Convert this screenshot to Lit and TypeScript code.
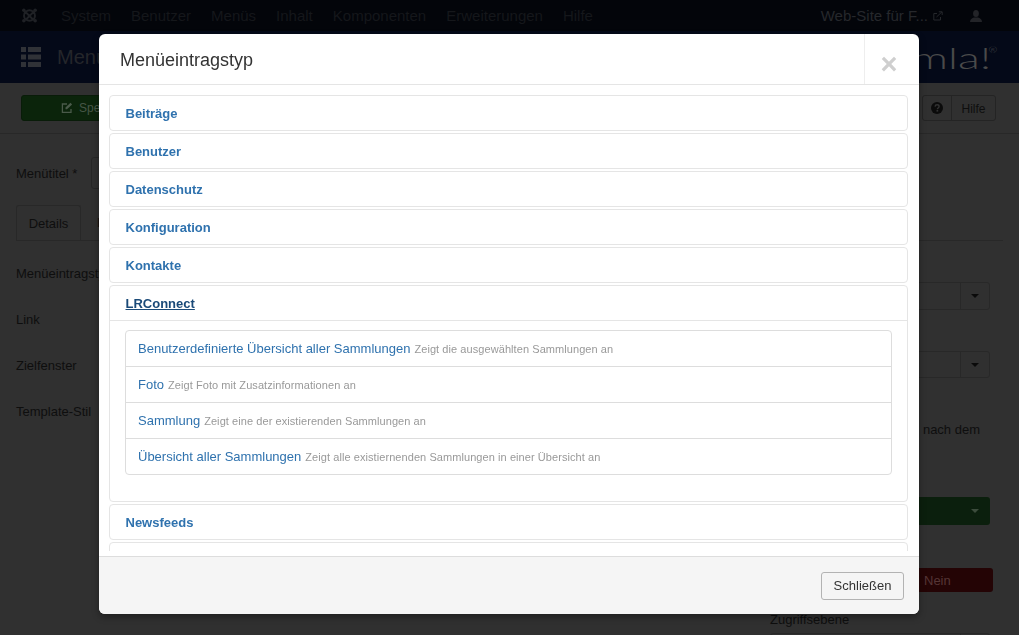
import { LitElement, html, css, svg } from "lit";
import { customElement } from "lit/decorators.js";

const closedBefore = ["Beiträge", "Benutzer", "Datenschutz", "Konfiguration", "Kontakte"];
const rows = [
  ["Benutzerdefinierte Übersicht aller Sammlungen", "Zeigt die ausgewählten Sammlungen an"],
  ["Foto", "Zeigt Foto mit Zusatzinformationen an"],
  ["Sammlung", "Zeigt eine der existierenden Sammlungen an"],
  ["Übersicht aller Sammlungen", "Zeigt alle existiernenden Sammlungen in einer Übersicht an"],
];
const navItems = ["System", "Benutzer", "Menüs", "Inhalt", "Komponenten", "Erweiterungen", "Hilfe"];

const joomla = svg`<svg width="17" height="17" viewBox="0 0 18 18" fill="none" stroke="#1f2125" stroke-width="2" stroke-linecap="round"><path d="M4 4.5 L13 13.5 M14 4.5 L5 13.5 M5 5 Q9 2 13 5 M5 13 Q9 16 13 13 M4.5 5 Q2 9 4.5 13 M13.5 5 Q16 9 13.5 13"/><circle cx="3" cy="3.5" r="1.9" fill="#1f2125" stroke="none"/><circle cx="15" cy="3.5" r="1.9" fill="#1f2125" stroke="none"/><circle cx="3" cy="14.5" r="1.9" fill="#1f2125" stroke="none"/><circle cx="15" cy="14.5" r="1.9" fill="#1f2125" stroke="none"/></svg>`;
const listIcon = svg`<svg width="20" height="20" viewBox="0 0 20 20" fill="#303237"><rect x="0" y="0" width="5" height="5"/><rect x="7" y="0" width="13" height="5"/><rect x="0" y="7.5" width="5" height="5"/><rect x="7" y="7.5" width="13" height="5"/><rect x="0" y="15" width="5" height="5"/><rect x="7" y="15" width="13" height="5"/></svg>`;
const editIcon = svg`<svg width="12" height="12" viewBox="0 0 12 12" fill="none" stroke="#4a5a4a" stroke-width="1.3"><path d="M10 7v3.4H1.4V2H6"/><path d="M4.5 5.5 9.5 0.8l1.6 1.6L6 7.3H4.5z" fill="#4a5a4a" stroke="none"/></svg>`;
const extIcon = svg`<svg width="10" height="10" viewBox="0 0 10 10" fill="none" stroke="#26282c" stroke-width="1"><path d="M7.5 6v3H.8V2.5H4"/><path d="M3.5 6 9 .8M5.8.8H9.2V4"/></svg>`;
const userIcon = svg`<svg width="12" height="12" viewBox="0 0 12 12" fill="#232428"><ellipse cx="6" cy="3.6" rx="2.9" ry="3.5"/><path d="M0 12c0-3 2-4 4-4.6h4c2 .6 4 1.6 4 4.6z"/></svg>`;
const helpIcon = svg`<svg width="12" height="12" viewBox="0 0 12 12"><circle cx="6" cy="6" r="6" fill="#0b0b0b"/><path d="M4 4.6C4.2 3.4 5 2.8 6.1 2.8 7.3 2.8 8.1 3.5 8.1 4.5 8.1 6 6.4 6 6.4 7.2" fill="none" stroke="#333" stroke-width="1.4"/><rect x="5.5" y="8" width="1.7" height="1.6" fill="#333"/></svg>`;

@customElement("app-root")
export class AppRoot extends LitElement {
  static styles = css`
    :host {
      display: block;
      position: relative;
      width: 1019px;
      height: 635px;
      overflow: hidden;
      background: #303030;
      font-family: "Liberation Sans", Arial, sans-serif;
      font-size: 13px;
      color: #0e0e0e;
    }
    a { text-decoration: none; }

    /* dimmed page behind the dialog */
    .nav {
      height: 31px;
      background: #03050a;
      display: flex;
      align-items: center;
      padding: 0 21px;
      box-sizing: border-box;
      font-size: 15px;
      color: #15171b;
    }
    .nav .logo { display: flex; width: 40px; }
    .nav .items { display: flex; gap: 20px; }
    .nav .right { margin-left: auto; display: flex; align-items: center; color: #26282c; padding-right: 16px; }
    .nav .ext { display: flex; margin-left: 5px; }
    .nav .user { display: flex; margin-left: 27px; }

    .brand {
      height: 52px;
      background: #040918;
      display: flex;
      align-items: center;
      padding: 0 28px 0 21px;
      color: #24262b;
      font-size: 20px;
    }
    .brand .ic { display: flex; margin-right: 16px; }
    .brand .logo {
      margin-left: auto;
      font-family: Lato, sans-serif;
      font-weight: 300;
      font-size: 30px;
      color: #4a4a4a;
      position: relative;
      transform: scaleX(1.5);
      transform-origin: right center;
    }
    .brand sup { font-size: 7px; position: absolute; top: 7px; right: -4px; }

    .toolbar {
      height: 51px;
      box-sizing: border-box;
      border-bottom: 1px solid #282828;
      display: flex;
      align-items: center;
      padding: 0 23px 0 21px;
    }
    .save {
      width: 120px;
      height: 26px;
      background: #0b240b;
      border: 1px solid #091c09;
      border-radius: 3px;
      box-sizing: border-box;
      display: flex;
      align-items: center;
      padding-left: 39px;
      gap: 6px;
      font-size: 12px;
      color: #465646;
    }
    .help {
      margin-left: auto;
      display: flex;
      height: 26px;
      box-sizing: border-box;
      border: 1px solid #242424;
      border-radius: 3px;
      font-size: 12px;
    }
    .help span { display: flex; align-items: center; justify-content: center; }
    .help .q { width: 28px; border-right: 1px solid #242424; }
    .help .t { width: 43px; padding-top: 1px; }

    .content { padding: 26px 16px 0; }
    .title-row { display: flex; align-items: center; height: 26px; gap: 14px; }
    .title-row .field { width: 40px; height: 32px; flex: none; border: 1px solid #272727; border-radius: 3px; box-sizing: border-box; }
    .tabs { display: flex; margin-top: 19px; height: 36px; box-sizing: border-box; border-bottom: 1px solid #282828; }
    .tabs .tab {
      width: 65px; height: 36px; box-sizing: border-box; border: 1px solid #282828; border-bottom: 0;
      border-radius: 3px 3px 0 0; display: flex; align-items: center; justify-content: center;
    }
    .tabs .next { padding-left: 16px; line-height: 36px; }
    .cols { display: flex; justify-content: space-between; }
    .left { display: flex; flex-direction: column; gap: 31px; padding-top: 25px; }
    .left div { height: 15px; line-height: 15px; }
    .side { width: 220px; margin-right: 13px; padding-top: 41px; display: flex; flex-direction: column; align-items: stretch; }
    .sel {
      height: 28px; flex: none; border: 1px solid #282828; border-radius: 3px; box-sizing: border-box;
      display: flex; justify-content: flex-end;
    }
    .sel i {
      width: 28px; border-left: 1px solid #282828; display: flex; align-items: center; justify-content: center;
    }
    .sel i::after, .green::after {
      content: ""; border: 4px solid transparent; border-top-color: #0a0a0a; border-bottom: 0;
    }
    .sel.two { margin-top: 41px; height: 27px; }
    .note { margin-top: 44px; text-align: right; padding-right: 10px; height: 15px; line-height: 15px; }
    .green {
      margin-top: 60px; height: 28px; flex: none; background: #0b1f0d; border-radius: 3px; display: flex; align-items: center;
      justify-content: flex-end; padding-right: 11px;
    }
    .green::after { border-top-color: #3c4c3c; }
    .nein {
      margin-top: 43px; margin-right: -3px; height: 24px; flex: none; background: #240405; border-radius: 3px; color: #553535;
      display: flex; align-items: center; padding-left: 154px;
    }
    .access { margin-top: 20px; height: 16px; line-height: 16px; }
    .sel.three { margin-top: 5px; }

    /* dialog */
    .modal {
      position: absolute;
      left: 99px;
      top: 34px;
      width: 820px;
      height: 580px;
      background: #fff;
      border-radius: 6px;
      box-shadow: 0 3px 7px rgba(0, 0, 0, 0.35);
      display: flex;
      flex-direction: column;
      overflow: hidden;
      will-change: transform;
    }
    .m-head {
      height: 51px;
      flex: none;
      box-sizing: border-box;
      border-bottom: 1px solid #e5e5e5;
      display: flex;
      align-items: stretch;
      justify-content: space-between;
    }
    .m-head h3 {
      margin: 0;
      padding: 16px 0 0 21px;
      font-weight: 400;
      font-size: 18px;
      line-height: 20px;
      color: #333;
    }
    .m-close {
      width: 55px;
      border-left: 1px solid #eee;
      display: flex;
      justify-content: center;
      align-items: flex-end;
      padding: 0 6px 5px 0;
      box-sizing: border-box;
      color: #cfcfcf;
      font-size: 29px;
      line-height: 29px;
      font-weight: 700;
    }
    .m-wrap { flex: none; height: 471px; }
    .m-body {
      height: 466px;
      padding: 10px 11px 0 10px;
      box-sizing: border-box;
      display: flex;
      flex-direction: column;
      gap: 2px;
      overflow: hidden;
    }
    .group {
      flex: none;
      border: 1px solid #e5e5e5;
      border-radius: 4px;
      box-sizing: border-box;
    }
    .g-head {
      height: 34px;
      display: flex;
      align-items: center;
      padding-left: 15.5px;
      font-weight: 700;
      font-size: 13px;
      color: #2f72ae;
    }
    .group.open .g-head { color: #1a4a78; text-decoration: underline; border-bottom: 1px solid #e5e5e5; height: 35px; box-sizing: border-box; }
    .g-body { padding: 9px 15px 26px; }
    .list { border: 1px solid #ddd; border-radius: 4px; }
    .row {
      height: 35px;
      display: flex;
      align-items: center;
      padding-left: 12px;
      gap: 4px;
      white-space: nowrap;
    }
    .row + .row { border-top: 1px solid #ddd; }
    .row a { color: #2f72ae; font-size: 13px; }
    .row small { color: #999; font-size: 11px; letter-spacing: 0.07px; }
    .m-foot {
      flex: 1;
      background: #f5f5f5;
      border-top: 1px solid #ddd;
      display: flex;
      align-items: center;
      justify-content: flex-end;
      padding-right: 15px;
    }
    .close-btn {
      width: 83px;
      height: 28px;
      box-sizing: border-box;
      background: #f5f5f5;
      border: 1px solid #b3b3b3;
      border-radius: 3px;
      display: flex;
      align-items: center;
      justify-content: center;
      font-size: 13px;
      color: #333;
    }
  `;

  render() {
    return html`
      <div class="nav">
        <span class="logo">${joomla}</span>
        <div class="items">${navItems.map((n) => html`<span>${n}</span>`)}</div>
        <div class="right">
          <span>Web-Site für F...</span><span class="ext">${extIcon}</span><span class="user">${userIcon}</span>
        </div>
      </div>
      <div class="brand">
        <span class="ic">${listIcon}</span><span>Menüs</span>
        <span class="logo">Joomla!<sup>®</sup></span>
      </div>
      <div class="toolbar">
        <div class="save">${editIcon}<span>Speichern</span></div>
        <div class="help"><span class="q">${helpIcon}</span><span class="t">Hilfe</span></div>
      </div>
      <div class="content">
        <div class="title-row"><span>Menütitel *</span><div class="field"></div></div>
        <div class="tabs"><div class="tab">Details</div><div class="next">Linktyp</div></div>
        <div class="cols">
          <div class="left">
            <div>Menüeintragstyp</div><div>Link</div><div>Zielfenster</div><div>Template-Stil</div>
          </div>
          <div class="side">
            <div class="sel one"><i></i></div>
            <div class="sel two"><i></i></div>
            <div class="note">nach dem</div>
            <div class="green"></div>
            <div class="nein">Nein</div>
            <div class="access">Zugriffsebene</div>
            <div class="sel three"><i></i></div>
          </div>
        </div>
      </div>

      <div class="modal">
        <div class="m-head">
          <h3>Menüeintragstyp</h3>
          <div class="m-close">×</div>
        </div>
        <div class="m-wrap">
          <div class="m-body">
            ${closedBefore.map((g) => html`<div class="group"><div class="g-head">${g}</div></div>`)}
            <div class="group open">
              <div class="g-head">LRConnect</div>
              <div class="g-body">
                <div class="list">
                  ${rows.map(([a, b]) => html`<div class="row"><a>${a}</a><small>${b}</small></div>`)}
                </div>
              </div>
            </div>
            <div class="group"><div class="g-head">Newsfeeds</div></div>
            <div class="group"><div class="g-head"></div></div>
          </div>
        </div>
        <div class="m-foot"><div class="close-btn">Schließen</div></div>
      </div>
    `;
  }
}
